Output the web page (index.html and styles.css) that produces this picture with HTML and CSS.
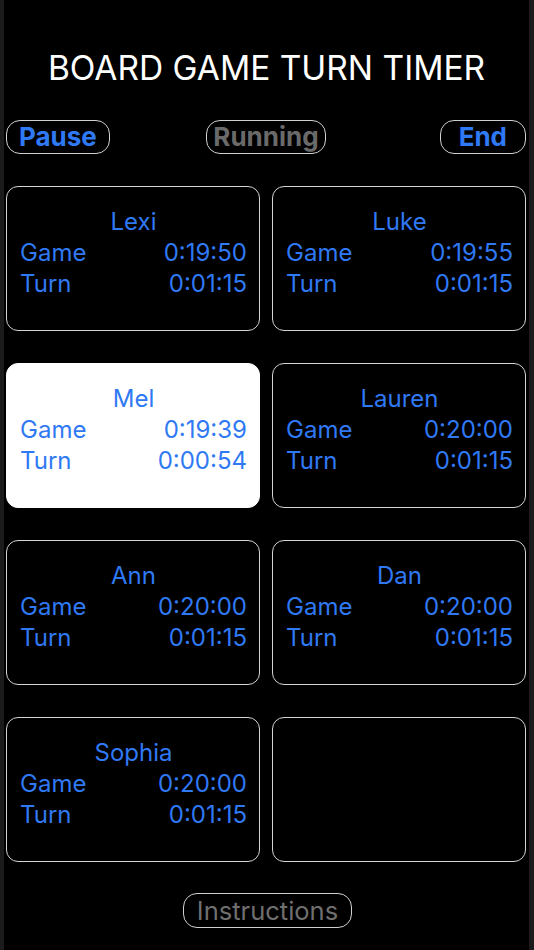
FILE: index.html
```html
<!DOCTYPE html>
<html lang="en">
<head>
<meta charset="utf-8">
<title>Board Game Turn Timer</title>
<link rel="stylesheet" href="styles.css">
</head>
<body>
<main class="screen">
  <h1 class="title">BOARD GAME TURN TIMER</h1>
  <div class="controls">
    <button class="pill pill-action pill-pause">Pause</button>
    <button class="pill pill-status">Running</button>
    <button class="pill pill-action pill-end">End</button>
  </div>
  <section class="grid">
    <div class="card">
      <div class="name">Lexi</div>
      <div class="row"><span>Game</span><span>0:19:50</span></div>
      <div class="row"><span>Turn</span><span>0:01:15</span></div>
    </div>
    <div class="card">
      <div class="name">Luke</div>
      <div class="row"><span>Game</span><span>0:19:55</span></div>
      <div class="row"><span>Turn</span><span>0:01:15</span></div>
    </div>
    <div class="card card-active">
      <div class="name">Mel</div>
      <div class="row"><span>Game</span><span>0:19:39</span></div>
      <div class="row"><span>Turn</span><span>0:00:54</span></div>
    </div>
    <div class="card">
      <div class="name">Lauren</div>
      <div class="row"><span>Game</span><span>0:20:00</span></div>
      <div class="row"><span>Turn</span><span>0:01:15</span></div>
    </div>
    <div class="card">
      <div class="name">Ann</div>
      <div class="row"><span>Game</span><span>0:20:00</span></div>
      <div class="row"><span>Turn</span><span>0:01:15</span></div>
    </div>
    <div class="card">
      <div class="name">Dan</div>
      <div class="row"><span>Game</span><span>0:20:00</span></div>
      <div class="row"><span>Turn</span><span>0:01:15</span></div>
    </div>
    <div class="card">
      <div class="name">Sophia</div>
      <div class="row"><span>Game</span><span>0:20:00</span></div>
      <div class="row"><span>Turn</span><span>0:01:15</span></div>
    </div>
    <div class="card card-empty"></div>
  </section>
  <div class="footer">
    <button class="pill pill-info">Instructions</button>
  </div>
</main>
</body>
</html>
```
FILE: styles.css
```css
html, body {
  margin: 0;
  padding: 0;
  background: #000;
}

body {
  font-family: Inter, "Noto Sans", "Liberation Sans", sans-serif;
}

.screen {
  box-sizing: border-box;
  width: 534px;
  height: 950px;
  border-left: 4px solid #1b1b1b;
  border-right: 5px solid #1b1b1b;
  padding: 48px 0 0 2px;
  display: flex;
  flex-direction: column;
}

.title {
  margin: 0;
  text-align: center;
  color: #fff;
  font-weight: 400;
  font-size: 33.5px;
  line-height: 40px;
  padding-right: 2px;
}

.controls {
  margin-top: 32px;
  display: grid;
  grid-template-columns: 1fr auto 1fr;
  align-items: center;
  padding-right: 3px;
}

.pill {
  box-sizing: border-box;
  height: 34px;
  border: 1.5px solid #d0d0d0;
  border-radius: 14px;
  background: transparent;
  font-family: inherit;
  font-size: 26px;
  line-height: 30px;
  padding: 0 12px;
  margin: 0;
}

.pill-action {
  color: #3079f4;
  font-weight: 700;
}

.pill-pause {
  justify-self: start;
}

.pill-end {
  justify-self: end;
  padding: 0 18px;
}

.pill-status {
  justify-self: center;
  color: #6a6a6a;
  font-weight: 700;
  padding: 0 6px;
}

.grid {
  margin-top: 32px;
  display: grid;
  grid-template-columns: 254px 254px;
  column-gap: 12px;
  row-gap: 32px;
}

.card {
  box-sizing: border-box;
  height: 145px;
  border: 1.5px solid #d4d4d4;
  border-radius: 12px;
  padding: 19px 12px 0 13px;
  color: #3079f4;
  font-size: 24px;
  line-height: 31px;
}

.card-active {
  background: #fff;
  border-color: #fff;
}

.name {
  text-align: center;
}

.row {
  display: flex;
  justify-content: space-between;
}

.footer {
  margin-top: 31px;
  display: flex;
  justify-content: center;
}

.pill-info {
  color: #6f6f6f;
  font-weight: 400;
  font-size: 25.5px;
  padding: 0 13px;
  height: 35px;
}
```
